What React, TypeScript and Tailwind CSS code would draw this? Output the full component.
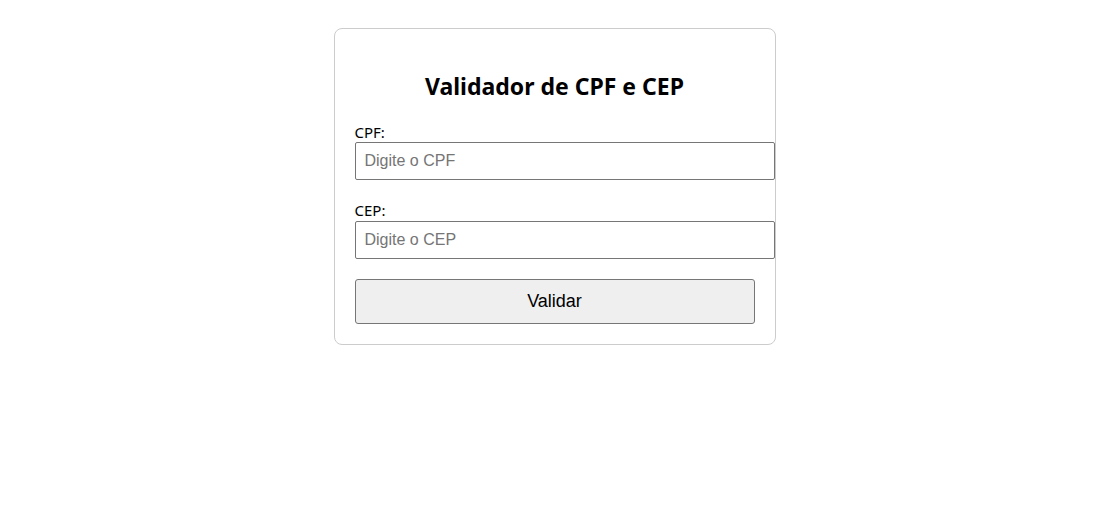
import React from 'react';

const App: React.FC = () => {
  return (
    <div className="min-h-[531px] w-full bg-white pt-[28px] font-['Noto_Sans',sans-serif] text-black">
      <div className="mx-auto w-[442px] translate-x-[2px] rounded-[8px] border border-[#cccccc] px-5 pb-5 pt-5">
        <h2 className="mb-[20px] mt-[21px] text-center text-[23px] font-bold leading-[32px]">
          Validador de CPF e CEP
        </h2>
        <form onSubmit={(e) => e.preventDefault()}>
          <label className="block text-[15px] leading-[20px]">CPF:</label>
          <input
            type="text"
            placeholder="Digite o CPF"
            className="box-content block h-[18px] w-full rounded-[2px] border border-[#767676] px-[9px] py-[9px] font-['Liberation_Sans',Arial,sans-serif] text-[16px] placeholder:text-[#757575]"
          />
          <label className="mt-[20px] block text-[15px] leading-[21px]">CEP:</label>
          <input
            type="text"
            placeholder="Digite o CEP"
            className="box-content block h-[18px] w-full rounded-[2px] border border-[#767676] px-[9px] py-[9px] font-['Liberation_Sans',Arial,sans-serif] text-[16px] placeholder:text-[#757575]"
          />
          <button
            type="submit"
            className="mt-[20px] block h-[45px] w-full rounded-[3px] border border-[#767676] bg-[#efefef] font-['Liberation_Sans',Arial,sans-serif] text-[18px] text-black"
          >
            Validar
          </button>
        </form>
      </div>
    </div>
  );
};

export default App;
